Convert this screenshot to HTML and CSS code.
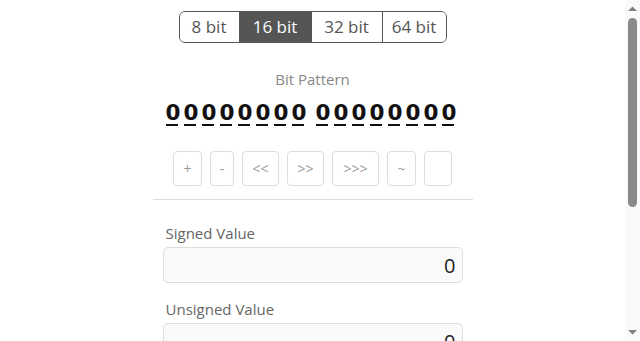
FILE: index.html
```html
<!DOCTYPE html>
<html>
<head>
<meta charset="utf-8">
<link rel="stylesheet" href="styles.css">
</head>
<body>
<div class="page">
<main class="app">
  <div class="width-group">
    <button class="width-btn w8">8 bit</button>
    <button class="width-btn w16 active">16 bit</button>
    <button class="width-btn w32">32 bit</button>
    <button class="width-btn w64">64 bit</button>
  </div>
  <div class="pattern-label">Bit Pattern</div>
  <div class="pattern">
    <div class="byte"><span class="bit">0</span><span class="bit">0</span><span class="bit">0</span><span class="bit">0</span><span class="bit">0</span><span class="bit">0</span><span class="bit">0</span><span class="bit">0</span></div>
    <div class="byte"><span class="bit">0</span><span class="bit">0</span><span class="bit">0</span><span class="bit">0</span><span class="bit">0</span><span class="bit">0</span><span class="bit">0</span><span class="bit">0</span></div>
  </div>
  <div class="ops">
    <button class="op op-plus">+</button>
    <button class="op op-minus">-</button>
    <button class="op op-shl">&lt;&lt;</button>
    <button class="op op-shr">&gt;&gt;</button>
    <button class="op op-ushr">&gt;&gt;&gt;</button>
    <button class="op op-not">~</button>
    <button class="op op-empty"></button>
  </div>
  <hr class="divider">
  <div class="fields">
    <label class="field">
      <span class="field-label">Signed Value</span>
      <input class="field-input" type="text" value="0">
    </label>
    <label class="field">
      <span class="field-label">Unsigned Value</span>
      <input class="field-input" type="text" value="0">
    </label>
    <label class="field">
      <span class="field-label">Hexadecimal Value</span>
      <input class="field-input" type="text" value="0">
    </label>
    <label class="field">
      <span class="field-label">Octal Value</span>
      <input class="field-input" type="text" value="0">
    </label>
  </div>
</main>
</div>
<div class="scrollbar" aria-hidden="true">
  <svg class="sb-arrow" width="15" height="15" viewBox="0 0 15 15"><polygon points="3,11 7.5,6.5 12,11" fill="#808080"/></svg>
  <div class="sb-track">
    <div class="sb-thumb"></div>
  </div>
  <svg class="sb-arrow" width="15" height="15" viewBox="0 0 15 15"><polygon points="3,4 7.5,8.5 12,4" fill="#808080"/></svg>
</div>
</body>
</html>
```

FILE: styles.css
```css
html, body {
  margin: 0;
  padding: 0;
  background: #fff;
}
body {
  font-family: "Open Sans", "Liberation Sans", sans-serif;
  color: #333;
}
.page {
  margin-right: 15px;
}
.scrollbar {
  position: fixed;
  top: 0;
  right: 0;
  width: 15px;
  height: 100vh;
  background: #fafafa;
  display: flex;
  flex-direction: column;
}
.sb-arrow {
  display: block;
  flex: none;
}
.sb-track {
  flex: 1;
  padding-top: 3px;
}
.sb-thumb {
  width: 9px;
  height: 189px;
  margin-left: 3px;
  background: #8a8a8a;
  border-radius: 5px;
}
.app {
  width: 320px;
  margin: 0 auto;
  padding: 11px 0 46px;
  display: flex;
  flex-direction: column;
  align-items: center;
}
.width-group {
  display: flex;
  border: 1px solid #555;
  border-radius: 6px;
  overflow: hidden;
  height: 32px;
  box-sizing: border-box;
}
.width-btn {
  box-sizing: border-box;
  font-family: "Open Sans", sans-serif;
  font-size: 17px;
  color: #555;
  background: #fff;
  border: none;
  border-left: 1px solid #555;
  padding: 0;
  margin: 0;
  height: 30px;
  line-height: 30px;
  text-align: center;
}
.w8 { width: 59px; border-left: none; }
.w16 { width: 72px; }
.w32 { width: 71px; }
.w64 { width: 64px; }
.width-btn.active {
  background: #555;
  color: #fff;
}
.pattern-label {
  margin-top: 26px;
  font-size: 15px;
  color: #888;
  line-height: 20px;
}
.pattern {
  display: flex;
  gap: 6px;
  margin-top: 13px;
}
.byte {
  display: flex;
}
.bit {
  display: inline-block;
  width: 12px;
  margin: 0 6px 0 0;
  text-align: center;
  font-family: "DejaVu Sans", sans-serif;
  font-weight: bold;
  font-size: 21.5px;
  line-height: 22px;
  color: #111;
  border-bottom: 2px solid #111;
}
.ops {
  display: flex;
  gap: 8px;
  margin-top: 25px;
}
.op {
  box-sizing: border-box;
  font-family: "Open Sans", sans-serif;
  font-size: 14px;
  color: #999;
  background: #fff;
  border: 1px solid #ddd;
  border-radius: 4px;
  height: 35px;
  padding: 0;
  margin: 0;
}
.op-plus { width: 29px; }
.op-minus { width: 24px; }
.op-shl { width: 37px; }
.op-shr { width: 37px; }
.op-ushr { width: 47px; }
.op-not { width: 29px; }
.op-empty { width: 28px; }
.divider {
  width: 320px;
  border: none;
  border-top: 1px solid #ddd;
  margin: 13px 0 0;
}
.fields {
  width: 300px;
  display: flex;
  flex-direction: column;
  gap: 16px;
  margin-top: 23px;
}
.field {
  display: flex;
  flex-direction: column;
  gap: 4px;
}
.field-label {
  font-size: 15px;
  color: #666;
  padding-left: 3px;
  line-height: 20px;
}
.field-input {
  box-sizing: border-box;
  height: 36px;
  width: 300px;
  background: #fafafa;
  border: 1px solid #ddd;
  border-radius: 5px;
  text-align: right;
  font-family: "Open Sans", sans-serif;
  font-size: 20px;
  color: #222;
  padding: 0 6px;
  margin: 0;
}
```
